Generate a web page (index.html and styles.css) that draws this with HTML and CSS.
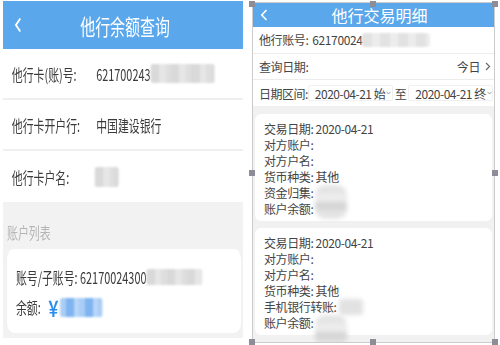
FILE: index.html
```html
<!DOCTYPE html>
<html lang="zh-CN">
<head>
    <meta charset="UTF-8">
    <meta name="viewport" content="width=device-width, initial-scale=1.0">
    <title>他行余额查询 / 他行交易明细</title>
    <link rel="stylesheet" href="styles.css">
</head>
<body>
    <div class="sheet">
        <!-- left screenshot: balance query (squeezed horizontally) -->
        <div class="shot shot-balance">
            <div class="balance">
                <div class="bar bar-lg">
                    <svg class="back" width="10" height="16" viewBox="0 0 10 16"><path d="M8.5 1.5 L2 8 L8.5 14.5" fill="none" stroke="#fff" stroke-width="2.4"/></svg>
                    <h1>他行余额查询</h1>
                    <span></span>
                </div>
                <div class="field">
                    <span class="field-label">他行卡(账)号:</span>
                    <span class="field-value">621700243<i class="mask mask-card"></i></span>
                </div>
                <div class="field">
                    <span class="field-label">他行卡开户行:</span>
                    <span class="field-value">中国建设银行</span>
                </div>
                <div class="field field-last">
                    <span class="field-label">他行卡户名:</span>
                    <span class="field-value"><i class="mask mask-name"></i></span>
                </div>
                <div class="list">
                    <div class="list-title">账户列表</div>
                    <div class="acct-card">
                        <p>账号/子账号: 62170024300<i class="mask mask-sub"></i></p>
                        <p>余额: <span class="yen">￥</span><i class="mask mask-blue"></i></p>
                    </div>
                </div>
            </div>
        </div>

        <!-- right screenshot: transaction detail, selected in the editor -->
        <div class="shot shot-detail">
            <div class="detail">
                <div class="bar bar-sm">
                    <svg class="back" width="8" height="12" viewBox="0 0 8 12"><path d="M6.5 1 L1.8 6 L6.5 11" fill="none" stroke="#fff" stroke-width="1.6"/></svg>
                    <h2>他行交易明细</h2>
                    <span></span>
                </div>
                <div class="row">
                    <span class="row-label">他行账号:</span>
                    <span class="row-value">62170024<i class="mask mask-acct"></i></span>
                </div>
                <div class="row">
                    <span class="row-label">查询日期:</span>
                    <span class="row-end">今日
                        <svg width="6" height="9" viewBox="0 0 6 9"><path d="M1 1 L4.6 4.5 L1 8" fill="none" stroke="#666" stroke-width="1.1"/></svg>
                    </span>
                </div>
                <div class="row row-range">
                    <span class="row-label">日期区间:</span>
                    <span class="date-box">2020-04-21 始<svg width="5" height="4" viewBox="0 0 5 4"><path d="M0.5 0.8 L2.5 3 L4.5 0.8" fill="none" stroke="#888" stroke-width="0.8"/></svg></span>
                    <span class="to">至</span>
                    <span class="date-box">2020-04-21 终<svg width="5" height="4" viewBox="0 0 5 4"><path d="M0.5 0.8 L2.5 3 L4.5 0.8" fill="none" stroke="#888" stroke-width="0.8"/></svg></span>
                </div>
                <div class="records">
                    <div class="record">
                        <p>交易日期: 2020-04-21</p>
                        <p>对方账户:</p>
                        <p>对方户名:</p>
                        <p>货币种类: 其他</p>
                        <p>资金归集: <i class="mask mask-tall"></i></p>
                        <p>账户余额:</p>
                    </div>
                    <div class="record">
                        <p>交易日期: 2020-04-21</p>
                        <p>对方账户:</p>
                        <p>对方户名:</p>
                        <p>货币种类: 其他</p>
                        <p>手机银行转账: <i class="mask mask-small"></i></p>
                        <p>账户余额: <i class="mask mask-tall"></i></p>
                    </div>
                </div>
            </div>
            <span class="handle h-tl"></span>
            <span class="handle h-tm"></span>
            <span class="handle h-tr"></span>
            <span class="handle h-ml"></span>
            <span class="handle h-mr"></span>
            <span class="handle h-bl"></span>
            <span class="handle h-bm"></span>
            <span class="handle h-br"></span>
        </div>
    </div>
</body>
</html>
```

FILE: styles.css
```css
body {
    margin: 0;
    background: #fff;
    font-family: "Noto Sans CJK SC", "Noto Sans", sans-serif;
    color: #333;
}
p, h1, h2 {
    margin: 0;
    font-weight: normal;
}
.sheet {
    display: flex;
    align-items: flex-start;
    gap: 10px;
    width: 500px;
    height: 345px;
    padding: 1px 0 0 3px;
    box-sizing: border-box;
    overflow: hidden;
}
.shot {
    flex: none;
}

/* blurred-out private values */
.mask {
    display: inline-block;
    vertical-align: middle;
    background: repeating-linear-gradient(90deg, #d9d9d9 0 12px, #e6e6e6 12px 22px, #dedede 22px 30px);
    filter: blur(1.2px);
    border-radius: 3px;
}

/* ---------- left: balance ---------- */
.shot-balance {
    width: 240px;
    height: 337px;
    overflow: hidden;
}
.balance {
    width: 353px;
    height: 337px;
    display: flex;
    flex-direction: column;
    transform: scaleX(0.68);
    transform-origin: 0 0;
}
.bar {
    display: grid;
    align-items: center;
    background: #5ba7eb;
    color: #fff;
}
.bar-lg {
    height: 48px;
    grid-template-columns: 44px 1fr 44px;
}
.bar-lg .back {
    margin-left: 17px;
}
.bar-lg h1 {
    font-size: 22px;
    text-align: center;
    padding-left: 6px;
}
.field {
    height: 49px;
    display: flex;
    align-items: center;
    padding-left: 13px;
    border-bottom: 2px solid #efefef;
    font-size: 16px;
    color: #3a3a3a;
    white-space: nowrap;
}
.field-last {
    border-bottom: none;
    height: 51px;
}
.field-label {
    width: 124px;
    flex: none;
}
.field-value {
    display: flex;
    align-items: center;
}
.mask-card {
    width: 94px;
    height: 19px;
}
.mask-name {
    width: 35px;
    height: 20px;
    margin-left: -2px;
}
.list {
    flex: 1;
    background: #f2f2f2;
    padding: 19px 3px 0 6px;
}
.list-title {
    font-size: 16px;
    line-height: 22px;
    color: #b5b5b5;
}
.acct-card {
    margin-top: 6px;
    height: 84px;
    box-sizing: border-box;
    padding: 13px 0 0 13px;
    background: #fff;
    border-radius: 10px;
}
.acct-card p {
    display: flex;
    align-items: center;
    font-size: 16px;
    line-height: 30px;
    color: #3a3a3a;
    white-space: nowrap;
}
.mask-sub {
    width: 82px;
    height: 16px;
}
.yen {
    color: #2b8cf0;
    font-size: 21px;
    font-weight: bold;
    margin-left: 8px;
}
.mask-blue {
    width: 62px;
    height: 19px;
    background: repeating-linear-gradient(90deg, #a9cdf6 0 8px, #7fb4f0 8px 20px, #b7d6f8 20px 28px);
}

/* ---------- right: transaction detail ---------- */
.shot-detail {
    position: relative;
    margin-top: 2px;
    width: 241px;
    height: 339px;
    outline: 1px solid #cbcbcb;
}
.detail {
    height: 100%;
    overflow: hidden;
    display: flex;
    flex-direction: column;
    background: #f1f1f1;
    letter-spacing: -0.4px;
}
.bar-sm {
    height: 25px;
    grid-template-columns: 24px 1fr 12px;
}
.bar-sm .back {
    margin-left: 7px;
}
.bar-sm h2 {
    font-size: 16px;
    text-align: center;
    letter-spacing: 0;
}
.row {
    height: 28px;
    display: flex;
    align-items: center;
    padding: 0 3px 0 6px;
    background: #fff;
    border-bottom: 1px solid #ececec;
    font-size: 12px;
    color: #444;
    white-space: nowrap;
}
.row-label {
    flex: none;
    margin-right: 4px;
}
.row-value {
    display: flex;
    align-items: center;
}
.mask-acct {
    width: 68px;
    height: 14px;
    background: repeating-linear-gradient(90deg, #e2e2e2 0 10px, #ececec 10px 18px);
}
.row-end {
    margin-left: auto;
    display: flex;
    align-items: center;
    gap: 5px;
}
.row-range {
    border-bottom: none;
    letter-spacing: -0.5px;
}
.row-range .row-label {
    margin-right: 0;
}
.date-box {
    flex: none;
    width: 85px;
    box-sizing: border-box;
    display: flex;
    align-items: center;
    gap: 1px;
    height: 16px;
    padding-left: 6px;
    border: 1px solid #f0f0f0;
    border-radius: 2px;
}
.to {
    flex: none;
    margin: 0 2px;
}
.records {
    flex: 1;
    padding: 8px 2px 0;
}
.record {
    background: #fff;
    border-radius: 6px;
    padding: 7px 0 4px 9px;
    margin-bottom: 7px;
}
.record p {
    font-size: 12px;
    line-height: 16px;
    height: 16px;
    color: #444;
    display: flex;
    align-items: flex-start;
    white-space: nowrap;
}
.mask-tall {
    width: 32px;
    height: 34px;
    margin-left: 2px;
    background: repeating-linear-gradient(0deg, #e4e4e4 0 9px, #d6d6d6 9px 17px, #ececec 17px 26px);
    filter: blur(2px);
    border-radius: 10px;
}
.mask-small {
    width: 24px;
    height: 16px;
    margin-left: 2px;
    background: #e2e2e2;
    filter: blur(2px);
}

/* selection handles around the right screenshot */
.handle {
    position: absolute;
    width: 6px;
    height: 6px;
    background: #8d8d98;
}
.h-tl { left: -4px; top: -2px; }
.h-tm { left: 117px; top: -2px; }
.h-tr { right: -4px; top: -2px; }
.h-ml { left: -4px; top: 167px; }
.h-mr { right: -4px; top: 167px; }
.h-bl { left: -4px; bottom: -3px; }
.h-bm { left: 117px; bottom: -3px; }
.h-br { right: -4px; bottom: -3px; }
```
